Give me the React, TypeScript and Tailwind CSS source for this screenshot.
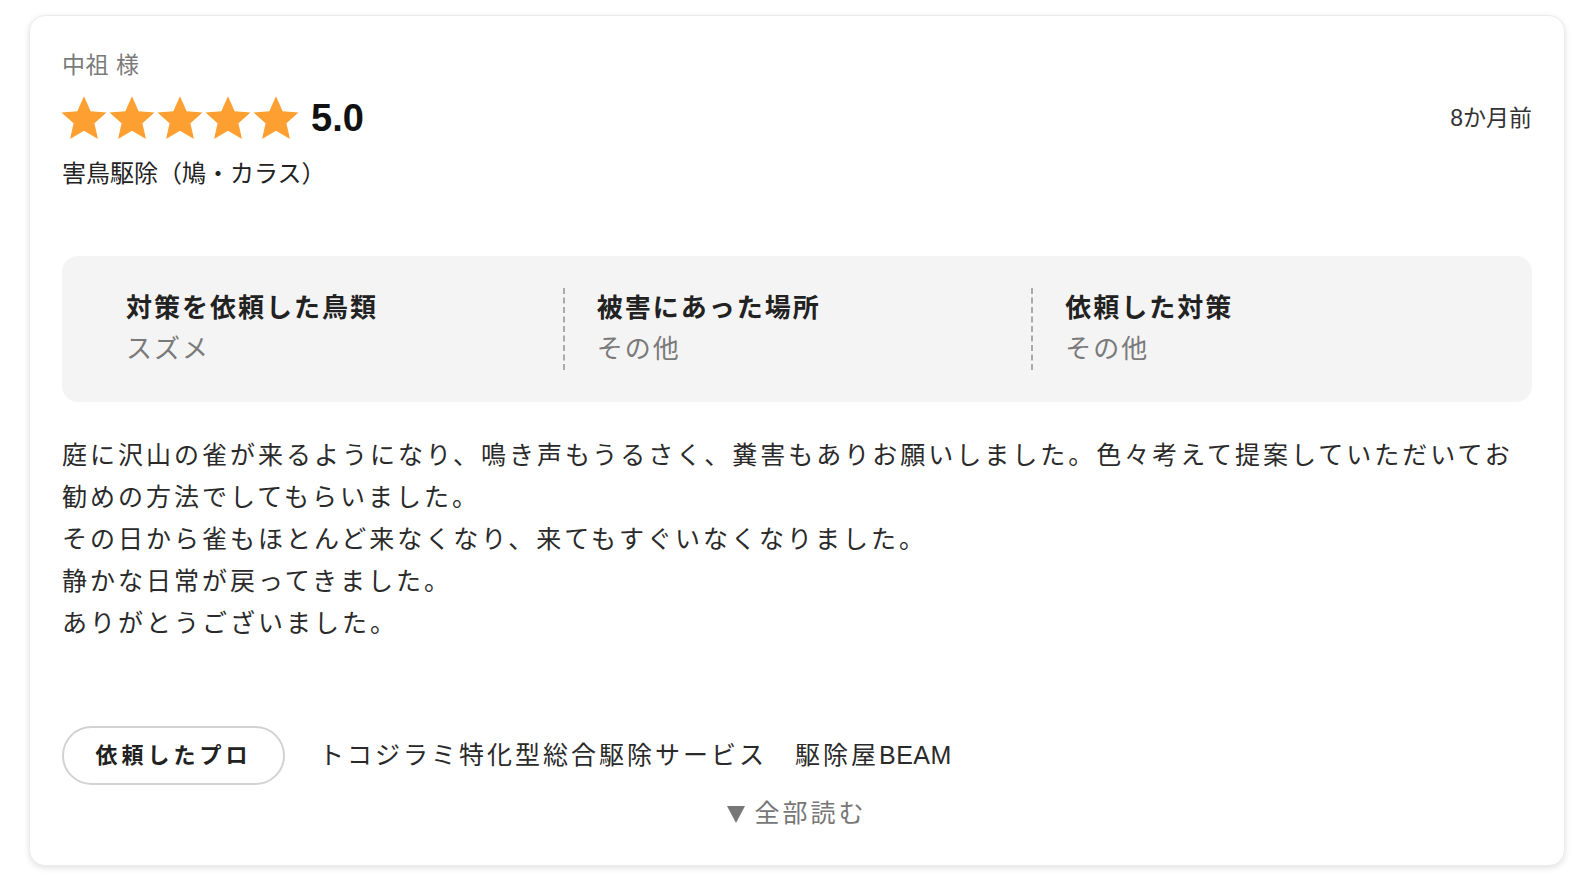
import React from 'react';

const font = { fontFamily: '"Liberation Sans", "Noto Sans CJK JP", sans-serif' };

function Star() {
  return (
    <svg viewBox="0 0 24 24" className="w-[50px] h-[50px] -mx-[1px]">
      <path
        d="M12 1.6l3.2 7.1 7.6.7-5.8 5.1 1.7 7.6L12 18.1l-6.7 4 1.7-7.6-5.8-5.1 7.6-.7z"
        fill="#fd9f31"
      />
    </svg>
  );
}

const details = [
  { label: '対策を依頼した鳥類', value: 'スズメ' },
  { label: '被害にあった場所', value: 'その他' },
  { label: '依頼した対策', value: 'その他' },
];

export default function App() {
  return (
    <div className="min-h-screen bg-white pt-[15px] pl-[29px] pr-[17px]" style={font}>
      {/* Review card */}
      <div className="bg-white rounded-[16px] border border-[#ececec] shadow-[0_2px_6px_rgba(0,0,0,0.12)] px-[32px] pt-[33px] pb-[31px]">
        <div className="text-[23px] leading-[33px] text-[#7a7a7a] tracking-[0.5px]">中祖 様</div>

        <div className="mt-[14px] h-[44px] flex items-center justify-between">
          <div className="flex items-center">
            <div className="flex items-center gap-[0px] -ml-[2px]">
              <Star />
              <Star />
              <Star />
              <Star />
              <Star />
            </div>
            <span className="ml-[11px] text-[38px] font-bold text-[#111] leading-none">5.0</span>
          </div>
          <span className="text-[23px] text-[#333] leading-none">8か月前</span>
        </div>

        <div className="mt-[17px] text-[24px] leading-[34px] text-[#222]">害鳥駆除（鳩・カラス）</div>

        {/* Detail box */}
        <div className="mt-[65px] bg-[#f4f4f4] rounded-[16px] px-8 py-8 grid grid-cols-3">
          {details.map((d, i) => (
            <div
              key={i}
              className={i === 0 ? 'pl-8' : 'pl-8 border-l-2 border-dashed border-[#aaaaaa]'}
            >
              <div className="text-[26px] leading-[41px] font-bold text-[#222] tracking-[2px]">{d.label}</div>
              <div className="text-[26px] leading-[41px] text-[#7a7a7a] tracking-[2px]">{d.value}</div>
            </div>
          ))}
        </div>

        {/* Body */}
        <p className="mt-8 text-[25px] leading-[42px] text-[#2a2a2a] tracking-[3px]">
          庭に沢山の雀が来るようになり、鳴き声もうるさく、糞害もありお願いしました。色々考えて提案していただいてお勧めの方法でしてもらいました。
          <br />
          その日から雀もほとんど来なくなり、来てもすぐいなくなりました。
          <br />
          静かな日常が戻ってきました。
          <br />
          ありがとうございました。
        </p>

        {/* Pro */}
        <div className="mt-[82px] flex items-center">
          <div className="w-[223px] h-[59px] rounded-full border-2 border-[#d2d2d2] flex items-center justify-center text-[22px] font-bold text-[#222] tracking-[4px]">
            依頼したプロ
          </div>
          <span className="ml-[34px] text-[25px] text-[#2a2a2a] tracking-[3px]">
            トコジラミ特化型総合駆除サービス　駆除屋<span className="tracking-[0.5px]">BEAM</span>
          </span>
        </div>

        <div className="mt-[7px] flex justify-center">
          <button className="text-[25px] leading-[42px] text-[#777] tracking-[3px] flex items-center">
            <svg viewBox="0 0 18 18" className="w-[18px] h-[18px] mr-[9px] mt-[2px]">
              <path d="M0 1h18L9 18z" fill="#777" />
            </svg>
            全部読む
          </button>
        </div>
      </div>
    </div>
  );
}
